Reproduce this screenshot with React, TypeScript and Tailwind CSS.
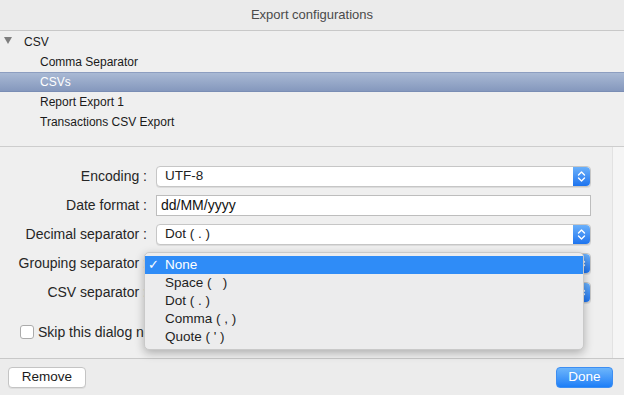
import React from "react";

function Stepper() {
  return (
    <div className="w-[17px] h-full rounded-r-[4px] bg-gradient-to-b from-[#6ab0fa] to-[#1c73ee] flex items-center justify-center shrink-0">
      <svg width="9" height="13" viewBox="0 0 9 13" fill="none" stroke="white" strokeWidth="1.4" strokeLinecap="round" strokeLinejoin="round">
        <path d="M1.5 5 L4.5 2 L7.5 5" />
        <path d="M1.5 8 L4.5 11 L7.5 8" />
      </svg>
    </div>
  );
}

function Select({ value }: { value: string }) {
  return (
    <div className="w-[435px] h-[21px] flex bg-white border border-[#c6c6c6] rounded-[4px] shadow-[0_1px_0_rgba(0,0,0,0.08)]">
      <div className="flex-1 flex items-center pl-[8px] text-[13.5px] text-[#222]">{value}</div>
      <Stepper />
    </div>
  );
}

function Row({ label, children }: { label: string; children: React.ReactNode }) {
  return (
    <div className="flex items-center h-[21px]">
      <div className="w-[147px] text-right text-[14px] text-[#262626] whitespace-nowrap">{label}</div>
      <div className="ml-[9px]">{children}</div>
    </div>
  );
}

export default function App() {
  const items = ["None", "Space (   )", "Dot ( . )", "Comma ( , )", "Quote ( ' )"];
  return (
    <div
      className="relative w-[624px] h-[395px] flex flex-col bg-[#ececec] overflow-hidden"
      style={{ fontFamily: '"Liberation Sans", Arial, sans-serif' }}
    >
      {/* Title */}
      <div className="h-[31px] shrink-0 border-b border-[#c8c8c8] flex items-center justify-center text-[13px] text-[#4a4a4a] bg-[#ebebeb]">
        Export configurations
      </div>

      {/* Tree */}
      <div className="h-[116px] shrink-0 border-b border-[#cdcdcd] bg-[#efefef] pt-[1px] text-[12px] text-[#1a1a1a]">
        <div className="h-[20px] flex items-center">
          <svg width="8" height="7" viewBox="0 0 8 7" className="ml-[4px] mb-[3px]">
            <path d="M0 0 H8 L4 7 Z" fill="#7e7e7e" />
          </svg>
          <span className="ml-[12px]">CSV</span>
        </div>
        <div className="h-[20px] flex items-center pl-[40px]">Comma Separator</div>
        <div className="h-[20px] flex items-center pl-[40px] text-white bg-gradient-to-b from-[#a9b9d4] to-[#8598bd] border-t border-[#8d9ec0] border-b border-b-[#7a8db4]">
          CSVs
        </div>
        <div className="h-[20px] flex items-center pl-[40px]">Report Export 1</div>
        <div className="h-[20px] flex items-center pl-[40px]">Transactions CSV Export</div>
      </div>

      {/* Form */}
      <div className="h-[212px] shrink-0 flex border-b border-[#c8c8c8]">
        <div className="w-[612px] bg-[#efefef] flex flex-col pt-[19px] gap-[8px]">
          <Row label="Encoding :">
            <Select value="UTF-8" />
          </Row>
          <Row label="Date format :">
            <div className="w-[435px] h-[21px] bg-white border border-[#bdbdbd] flex items-center pl-[4px] text-[14px] text-[#111]">
              dd/MM/yyyy
            </div>
          </Row>
          <Row label="Decimal separator :">
            <Select value="Dot ( . )" />
          </Row>
          <Row label="Grouping separator :">
            <Select value="None" />
          </Row>
          <Row label="CSV separator :">
            <Select value="Comma ( , )" />
          </Row>
          <div className="flex items-center mt-[13px] pl-[20px] h-[16px]">
            <div className="w-[14px] h-[14px] bg-white border border-[#ababab] rounded-[3px]" />
            <span className="ml-[4px] text-[14px] text-[#262626]">Skip this dialog next time</span>
          </div>
        </div>
        <div className="flex-1 border-l border-[#e2e2e2] bg-[#f5f5f5]" />
      </div>

      {/* Footer */}
      <div className="flex-1 flex items-center justify-between pl-[8px] pr-[11px] bg-[#ececec]">
        <div className="w-[78px] h-[21px] bg-white border border-[#c4c4c4] rounded-[4px] flex items-center justify-center text-[13.5px] text-[#1a1a1a] shadow-[0_1px_0_rgba(0,0,0,0.06)]">
          Remove
        </div>
        <div className="w-[57px] h-[21px] rounded-[4px] bg-gradient-to-b from-[#6cb5fb] to-[#1b7ef7] border border-[#3d8ef2] flex items-center justify-center text-[13.5px] text-white">
          Done
        </div>
      </div>

      {/* Popup menu */}
      <div className="absolute left-[144px] top-[252px] w-[440px] h-[98px] bg-[#ececed] border border-[#c9c9c9] rounded-[5px] shadow-[0_3px_10px_rgba(0,0,0,0.28)] pt-[3px] text-[13.5px] text-[#1e1e1e]">
        {items.map((it, i) => (
          <div
            key={it}
            className={
              i === 0
                ? "h-[18px] flex items-center bg-[#2f8cf7] text-white"
                : "h-[18px] flex items-center"
            }
          >
            <span className="w-[20px] pl-[3px] text-[13px]">{i === 0 ? "✓" : ""}</span>
            <span className="whitespace-pre">{it}</span>
          </div>
        ))}
      </div>
    </div>
  );
}
